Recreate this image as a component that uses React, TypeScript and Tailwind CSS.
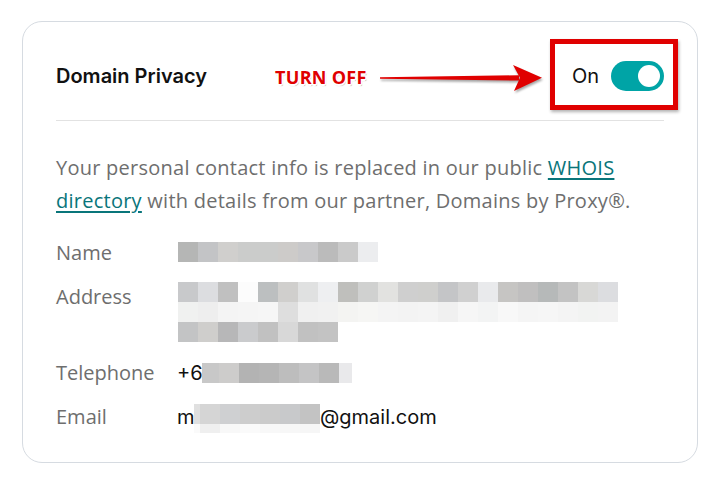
const nameBlocks = ['#b5b6b5', '#c3c4c6', '#d0cfcd', '#cbcccb', '#cbcccb', '#cdcbc9', '#c8c8ca', '#bbbbbb', '#cacaca', '#ecedef']

const addressRows = [
  ['#c8c9cb', '#dcdde0', '#c0c0c0', '#fcfcfc', '#bcbfc0', '#d0cfcd', '#e0e1e1', '#eeeff1', '#bfbfbc', '#d0d1d0', '#e2e2e0', '#cfcfcf', '#cfcfcd', '#c4c5c7', '#d0d0d0', '#e9eaec', '#c6c5c3', '#c0bfbf', '#b6b9b9', '#c3c3c3', '#d8d8d6', '#dcdde0'],
  ['#f0f1f0', '#eeeeee', '#f4f4f4', '#f5f5f5', '#f6f6f6', '#dedede', '#f0f0f0', '#f1f1f1', '#f4f4f2', '#f6f6f4', '#f4f4f4', '#f3f3f3', '#f4f4f4', '#f0f0f0', '#f6f6f6', '#f3f4f4', '#f8f8f8', '#f5f5f5', '#f6f6f6', '#f4f4f4', '#f2f3f2', '#f3f3f3'],
  ['#c3c4c5', '#cfcecc', '#b7b7b8', '#cacbcd', '#c1c1c1', '#d8d8d8', '#c1c1c1', '#c3c3c3'],
]

const phoneBlocks = ['#cdcccb', '#b3b3b3', '#b5b5b5', '#bdbdbd', '#c4c4c5', '#b9b9b9']

const emailTop = ['#d5d5d5', '#cfd0d2', '#cdcdcd', '#cbcbcb', '#c8c9cb', '#c3c3c3']
const emailBottom = ['#efefef', '#f8f8f8', '#fafafa', '#f8f8f8', '#f7f7f7', '#f6f6f6']

const Blocks = ({ colors }: { colors: string[] }) => (
  <div className="flex h-[20px]">
    {colors.map((c, i) => (
      <div key={i} className="w-[20px] h-[20px]" style={{ background: c }} />
    ))}
  </div>
)

const App = () => {
  return (
    <div className="w-[720px] h-[482px] bg-white pt-[21px] pl-[22px] font-['Open_Sans',sans-serif]">
      <div className="relative w-[676px] h-[442px] rounded-[20px] border border-[#d6dbe1] px-[33px]">
        {/* header */}
        <div className="relative flex items-center justify-between h-[99px] pt-[10px] border-b border-[#e2e2e2]">
          <h2 className="font-['Inter',sans-serif] font-semibold text-[20px] text-[#111]">Domain Privacy</h2>

          <span className="absolute left-[219px] top-[45px] font-['Open_Sans',sans-serif] font-bold text-[18px] leading-[20px] tracking-[0.3px] text-[#e00000] [text-shadow:1.5px_0_0_#fff,-1.5px_0_0_#fff,0_1.5px_0_#fff,0_-1.5px_0_#fff,1px_1px_0_#fff,-1px_-1px_0_#fff,1px_-1px_0_#fff,-1px_1px_0_#fff,1px_2px_1px_rgba(0,0,0,0.3)]">
            TURN OFF
          </span>

          <svg
            className="absolute left-[323px] top-[40px] drop-shadow-[1px_2px_1px_rgba(0,0,0,0.35)]"
            width="166"
            height="32"
            viewBox="0 0 166 32"
          >
            <polygon points="1,15.2 140,13.2 140,18.6 1,16.8" fill="#e00000" />
            <polygon points="134,3 163,15.8 135,29 141,15.8" fill="#e00000" />
          </svg>

          <div className="relative flex items-center gap-[12px]">
            <span className="font-['Inter',sans-serif] text-[20px] text-[#111]">On</span>
            <div className="flex items-center justify-end w-[53px] h-[30px] rounded-full bg-[#00a4a6] pr-[4px]">
              <div className="w-[22px] h-[22px] rounded-full bg-white" />
            </div>
            <div className="absolute -left-[22px] -right-[14px] -top-[22px] -bottom-[19px] border-[5px] border-[#e00000] shadow-[1px_2px_3px_rgba(0,0,0,0.3)]" />
          </div>
        </div>

        {/* description */}
        <p className="mt-[30px] text-[20px] leading-[33px] tracking-[0.25px] text-[#6e6e6e]">
          Your personal contact info is replaced in our public{' '}
          <a href="#" className="text-[#09757a] underline underline-offset-[3px] decoration-[2px]">
            WHOIS directory
          </a>{' '}
          with details from our partner, Domains by Proxy®.
        </p>

        {/* details */}
        <div className="flex flex-col text-[20px] leading-[24px]">
          <div className="flex items-start mt-[24px]">
            <span className="w-[122px] text-[#6e6e6e]">Name</span>
            <div className="pt-[1px]">
              <Blocks colors={nameBlocks} />
            </div>
          </div>

          <div className="flex items-start mt-[17px]">
            <span className="w-[122px] pt-[3px] text-[#6e6e6e]">Address</span>
            <div className="flex flex-col">
              {addressRows.map((r, i) => (
                <Blocks key={i} colors={r} />
              ))}
            </div>
          </div>

          <div className="flex items-start mt-[19px]">
            <span className="w-[121px] text-[#6e6e6e]">Telephone</span>
            <div className="flex items-start font-['Inter',sans-serif] text-[20px] text-[#111]">
              <span className="w-[25px]">+6</span>
              <div className="flex mt-[2px]">
                <div className="w-[17px] h-[20px] bg-[#c8c8c8]" />
                <Blocks colors={phoneBlocks} />
                <div className="w-[13px] h-[20px] bg-[#e9e9eb]" />
              </div>
            </div>
          </div>

          <div className="flex items-start mt-[20px]">
            <span className="w-[121px] text-[#6e6e6e]">Email</span>
            <div className="flex items-start font-['Inter',sans-serif] text-[20px] text-[#111]">
              <span className="w-[17px]">m</span>
              <div className="flex flex-col -mt-[1px]">
                <div className="flex">
                  <div className="w-[6px] h-[20px] bg-[#e0e0e0]" />
                  <Blocks colors={emailTop} />
                </div>
                <div className="flex">
                  <div className="w-[6px] h-[9px] bg-[#fafafa]" />
                  {emailBottom.map((c, i) => (
                    <div key={i} className="w-[20px] h-[9px]" style={{ background: c }} />
                  ))}
                </div>
              </div>
              <span>@gmail.com</span>
            </div>
          </div>
        </div>
      </div>
    </div>
  )
}

export default App
